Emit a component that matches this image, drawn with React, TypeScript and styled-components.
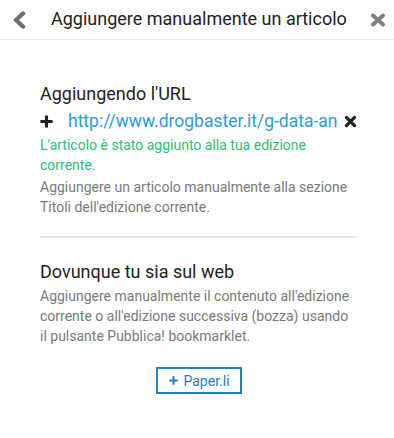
import React from 'react'
import styled, { createGlobalStyle } from 'styled-components'

const GlobalStyle = createGlobalStyle`
  body {
    margin: 0;
    background: #fff;
    font-family: Roboto, "Liberation Sans", sans-serif;
    color: #222;
  }
`

const ChevronLeft = () => (
  <svg width="14" height="18" viewBox="0 0 14 18">
    <path d="M11 2.5 L4 9 L11 15.5" fill="none" stroke="#6f6f6f" strokeWidth="4.4" strokeLinecap="round" strokeLinejoin="round" />
  </svg>
)

const Close = () => (
  <svg width="16" height="14" viewBox="0 0 16 14">
    <path d="M3 2.5 L13 11.5 M13 2.5 L3 11.5" stroke="#808080" strokeWidth="4" strokeLinecap="round" />
  </svg>
)

const Cross = ({ size, color }: { size: number; color: string }) => (
  <svg width={size} height={size} viewBox="0 0 16 16">
    <path d="M3 3 L13 13 M13 3 L3 13" stroke={color} strokeWidth="4" strokeLinecap="round" />
  </svg>
)

const Plus = ({ size, color, weight }: { size: number; color: string; weight: number }) => (
  <svg width={size} height={size} viewBox="0 0 16 16">
    <path d="M8 0.5 V15.5 M0.5 8 H15.5" stroke={color} strokeWidth={weight} />
  </svg>
)

export default function App() {
  return (
    <Page>
      <GlobalStyle />
      <Header>
        <ChevronLeft />
        <Title>Aggiungere manualmente un articolo</Title>
        <Close />
      </Header>
      <Content>
        <Section>
          <SectionTitle>Aggiungendo l'URL</SectionTitle>
          <UrlRow>
            <Plus size={13} color="#222" weight={3.8} />
            <UrlText>http://www.drogbaster.it/g-data-an</UrlText>
            <Cross size={13} color="#222" />
          </UrlRow>
          <Success>L'articolo è stato aggiunto alla tua edizione corrente.</Success>
          <Hint>Aggiungere un articolo manualmente alla sezione Titoli dell'edizione corrente.</Hint>
        </Section>
        <Divider />
        <Section>
          <SectionTitle>Dovunque tu sia sul web</SectionTitle>
          <Hint>
            Aggiungere manualmente il contenuto all'edizione corrente o all'edizione successiva (bozza) usando il
            pulsante Pubblica! bookmarklet.
          </Hint>
          <ButtonRow>
            <OutlineButton>
              <Plus size={9} color="#2a7db6" weight={3.6} />
              Paper.li
            </OutlineButton>
          </ButtonRow>
        </Section>
      </Content>
    </Page>
  )
}

const Page = styled.div`
  width: 394px;
  height: 438px;
  background: #fff;
`
const Header = styled.header`
  display: flex;
  align-items: center;
  height: 39px;
  padding: 0 8px 0 12px;
  border-bottom: 1px solid #e6e6e6;
`
const Title = styled.h1`
  flex: 1;
  margin: 0 0 2px 25px;
  font-size: 18px;
  font-weight: 400;
  color: #222;
  white-space: nowrap;
`
const Content = styled.main`
  padding: 42px 37px 0 40px;
`
const Section = styled.section`
  display: flex;
  flex-direction: column;
`
const SectionTitle = styled.h2`
  margin: 0;
  font-size: 18px;
  font-weight: 400;
  line-height: 24px;
  color: #222;
`
const UrlRow = styled.div`
  display: flex;
  align-items: center;
  height: 26px;
  margin-top: 2px;
  svg:first-child {
    margin-right: 15px;
  }
  svg:last-child {
    margin-left: 6px;
  }
`
const UrlText = styled.span`
  font-size: 17.5px;
  color: #2e9bd8;
  white-space: nowrap;
`
const Success = styled.p`
  margin: 1px 0 0;
  font-size: 14px;
  line-height: 20px;
  color: #2bc07b;
`
const Hint = styled.p`
  margin: 2px 0 0;
  font-size: 14px;
  line-height: 20px;
  color: #7a7a7a;
`
const Divider = styled.hr`
  margin: 19px 0 22px;
  border: 0;
  border-top: 2px solid #e6e6e6;
`
const ButtonRow = styled.div`
  display: flex;
  justify-content: center;
  margin-top: 21px;
  padding-left: 1px;
`
const OutlineButton = styled.button`
  display: flex;
  align-items: center;
  gap: 5px;
  height: 27px;
  margin: 0;
  padding: 0 10px 0 11px;
  border: 2px solid #2a7db6;
  border-radius: 0;
  background: #fff;
  font-family: Roboto, "Liberation Sans", sans-serif;
  font-size: 14px;
  color: #2a7db6;
`
